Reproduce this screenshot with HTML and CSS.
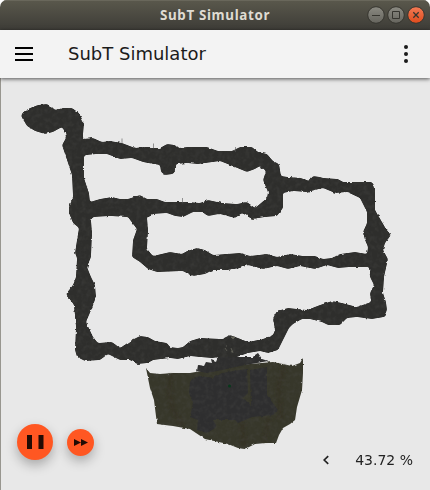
FILE: index.html
```html
<!DOCTYPE html>
<html lang="en">
<head>
<meta charset="utf-8">
<title>SubT Simulator</title>
<link rel="stylesheet" href="styles.css">
</head>
<body>
<div class="window">
  <header class="titlebar">
    <span class="window-title">SubT Simulator</span>
    <svg class="window-controls" width="60" height="20" viewBox="0 0 60 20">
      <defs>
        <linearGradient id="grey" x1="0" y1="0" x2="0" y2="1"><stop stop-color="#8b8a82"/><stop offset="1" stop-color="#65645d"/></linearGradient>
        <linearGradient id="orange" x1="0" y1="0" x2="0" y2="1"><stop stop-color="#f37b56"/><stop offset="1" stop-color="#df4b1c"/></linearGradient>
      </defs>
      <g stroke="#36352f">
        <circle cx="10" cy="10" r="8.3" fill="url(#grey)"/>
        <circle cx="30" cy="10" r="8.3" fill="url(#grey)"/>
        <circle cx="50" cy="10" r="8.3" fill="url(#orange)"/>
        <path d="M6 10.500h8M26.500 6.500h7v7h-7z" fill="none"/>
        <path d="M47.300 7.300l5.400 5.400m0-5.400l-5.400 5.400" stroke-width="1.300"/>
      </g>
    </svg>
  </header>
  <nav class="toolbar">
    <svg class="menu" width="18" height="14" viewBox="0 0 18 14"><path d="M0 0h18v2H0zM0 6h18v2H0zM0 12h18v2H0z"/></svg>
    <h1 class="app-title">SubT Simulator</h1>
    <svg class="more" width="4" height="18" viewBox="0 0 4 18"><circle cx="2" cy="2" r="2"/><circle cx="2" cy="9" r="2"/><circle cx="2" cy="16" r="2"/></svg>
  </nav>
  <main class="scene">
    <svg class="map" width="430" height="412" viewBox="0 78 430 412">
      <defs>
        <filter id="rock" x="-5%" y="-5%" width="110%" height="110%" color-interpolation-filters="sRGB">
          <feTurbulence type="fractalNoise" baseFrequency=".22" numOctaves="2" seed="4" result="n"/>
          <feDisplacementMap in="SourceGraphic" in2="n" scale="2.500" xChannelSelector="R" yChannelSelector="G" result="s"/>
          <feColorMatrix in="n" values="0 0 0 0 .3  0 0 0 0 .3  0 0 0 0 .29  .7 0 0 0 -.28" result="t"/>
          <feComposite in="t" in2="s" operator="in" result="g"/>
          <feMerge><feMergeNode in="s"/><feMergeNode in="g"/></feMerge>
        </filter>
        <filter id="round" x="-5%" y="-5%" width="110%" height="110%" color-interpolation-filters="sRGB">
          <feGaussianBlur stdDeviation="1.200"/>
          <feComponentTransfer><feFuncA type="linear" slope="4" intercept="-1.500"/></feComponentTransfer>
        </filter>
        <filter id="soft"><feGaussianBlur stdDeviation="1.500"/></filter>
      </defs>
      <g filter="url(#rock)">
        <path fill="#37372a" d="M146 368L150 373 160 374 173 373 190 373 207 370 223 367 250 364 273 362 292 366 300 363 303 358 303 373 302 390 297 407 295 420 290 424 283 428 279 435 276 443 265 443 255 444 245 449 238 448 228 444 205 439 190 429 173 426 157 424 154 400 150 388z"/>
        <g filter="url(#soft)" opacity=".4" fill="none" stroke="#30291f" stroke-width="4">
          <path d="M171 374L169 393 173 410 182 425M242 420L244 447M269 418L264 442M284 365L278 390 281 421"/>
        </g>
        <path fill="#2e2e2f" d="M193 378L200 376 213 378 222 373 233 371 247 369 248 393 243 398 251 405 250 370 267 367 267 395 278 410 273 415 252 417 238 423 235 420 213 420 217 427 207 433 197 430 198 420 190 417 193 403 189 393 190 382z"/>
        <path fill="#2e2e2e" d="M197 371L198 365 204 366 206 362 212 363 211 359 216 361 218 356 237 357 253 357 255 355 258 353 262 359 268 361 257 363 240 366 222 370 207 373z"/>
        <g filter="url(#round)">
        <path fill="#2e2e2c" fill-rule="evenodd" d="M21 116L23 112 30 108 38 105 47 104 52 107 55 110 63 108 72 108 79 113 84 123 83 135 83 139 93 138 102 142 110 141 122 143 135 148 143 147 152 148 160 148 167 144 175 145 178 148 188 147 207 147 218 151 232 151 240 147 252 147 258 152 267 154 273 161 279 164 281 176 288 177 302 178 309 181 313 176 320 177 323 178 338 179 343 182 360 182 372 182 375 187 375 210 382 222 386 229 391 235 385 243 383 250 388 259 384 277 383 293 386 302 387 310 384 317 372 319 357 317 347 318 340 325 328 325 322 322 310 319 302 319 293 324 289 328 283 340 278 350 268 353 260 351 248 353 237 357 220 357 212 358 200 357 190 356 178 359 170 358 153 360 148 363 137 364 130 360 120 360 108 354 100 360 85 361 77 357 75 350 76 327 74 305 66 294 73 285 76 277 77 258 75 253 77 240 79 228 73 223 69 213 69 207 73 197 72 175 67 160 62 145 66 138 65 132 62 127 53 132 45 134 35 131 27 126z
        M84 156L86 155 97 154 107 154 120 159 132 158 143 162 148 163 160 165 161 172 165 175 173 174 176 170 176 164 187 163 198 164 220 161 230 165 247 172 255 169 260 166 266 171 263 180 268 192 267 198 255 208 247 202 237 204 222 203 208 200 200 203 188 202 165 202 157 199 147 199 140 195 128 199 120 199 112 197 100 199 90 202 89 193 84 178z
        M283 193L293 191 307 192 323 188 335 193 347 192 360 198 367 212 367 223 363 232 365 240 368 247 367 254 355 252 340 254 332 258 323 259 315 256 303 256 290 254 277 257 267 254 250 256 240 253 213 255 205 250 197 248 187 251 182 254 170 252 153 256 147 249 148 230 147 217 152 214 167 213 175 216 183 217 193 212 202 212 208 216 220 214 235 218 242 213 252 219 265 217 277 216 283 208z
        M91 220L93 217 110 216 128 217 133 224 137 229 133 240 132 257 140 262 148 269 157 272 183 271 190 275 193 276 205 274 213 270 227 270 240 268 248 265 263 269 277 266 288 269 300 266 315 269 327 265 338 268 350 267 369 267 370 277 374 285 370 293 371 302 357 307 342 303 332 301 320 305 307 310 288 308 277 311 273 318 275 330 273 335 263 339 248 342 238 338 230 335 222 339 200 338 190 341 183 347 178 348 170 347 167 343 155 341 148 337 140 336 132 340 120 348 112 342 98 343 93 337 86 322 92 308 96 297 95 285 91 277 87 267 91 257 92 233z"/>
        </g>
      </g>
      <path d="M122 138.500v5M153.500 143.500v5M182.500 198v5M235.500 147v5" stroke="#555" stroke-width=".6"/>
      <path d="M231 337l4 0-2 2zM225 348l2 3M231 348l2 5M226 346l1 0M231 352l2-1" fill="#65655b" stroke="#65655b" stroke-width=".8"/>
      <circle cx="229.500" cy="386" r="1.500" fill="#07391a"/>
    </svg>
    <footer class="controls">
      <div class="playback">
        <button class="round pause" aria-label="Pause"><svg width="17" height="14" viewBox="0 0 17 14"><path d="M0 0h5v14H0zM11.500 0h5v14h-5z"/></svg></button>
        <button class="round forward" aria-label="Fast forward"><svg width="14" height="7" viewBox="0 0 14 7"><path d="M0 0l7 3.500L0 7zM7 0l7 3.500L7 7z"/></svg></button>
      </div>
      <div class="status">
        <svg class="chevron" width="6" height="10" viewBox="0 0 6 10"><path d="M5.200 1.200L1.200 5l4 3.800"/></svg>
        <span class="percent">43.72 %</span>
      </div>
    </footer>
  </main>
</div>
</body>
</html>
```
FILE: styles.css
```css
* { box-sizing: border-box; }
body { margin: 0; background: #fff; font-family: "DejaVu Sans", sans-serif; }
.window { width: 430px; height: 490px; display: flex; flex-direction: column; border-radius: 7px 7px 0 0; overflow: hidden; }
.titlebar { height: 30px; flex: none; display: grid; grid-template-columns: 1fr auto 1fr; align-items: center; background: linear-gradient(#5a584c, #3d3c37); box-shadow: inset 0 1px #69675b; }
.window-title { grid-column: 2; font: bold 13.4px "Noto Sans", sans-serif; letter-spacing: .65px; color: #dfdbd2; white-space: nowrap; }
.window-controls { justify-self: end; margin-right: 4px; }
.toolbar { height: 48px; flex: none; display: flex; align-items: center; padding: 0 22px 0 15px; background: #f3f3f3; box-shadow: 0 1px 4px rgba(0,0,0,.65); z-index: 1; }
.app-title { margin: 0 auto 0 35px; font-size: 18px; font-weight: 400; line-height: 24px; color: #1b1b1b; white-space: nowrap; }
.more { fill: #1b1b1b; }
.scene { flex: 1; display: grid; background: #e8e8e8; box-shadow: inset 1px 0 #98968f; }
.map, .controls { grid-area: 1 / 1; display: block; }
.controls { align-self: end; display: flex; justify-content: space-between; align-items: flex-end; padding: 0 17px 20px; z-index: 1; }
.playback { display: flex; align-items: center; gap: 14px; margin-bottom: 10px; }
.round { display: flex; align-items: center; justify-content: center; padding: 0; border: 0; border-radius: 50%; background: #ff5722; fill: #210b04; box-shadow: 0 5px 12px rgba(0,0,0,.28); }
.pause { width: 36px; height: 36px; }
.pause svg { margin-left: 1px; }
.forward { width: 27px; height: 27px; }
.forward svg { margin-top: 1px; }
.status { display: flex; align-items: center; gap: 26px; }
.chevron { fill: none; stroke: #222; stroke-width: 1.7; }
.percent { font-size: 14px; line-height: 20px; color: #222; }
```
